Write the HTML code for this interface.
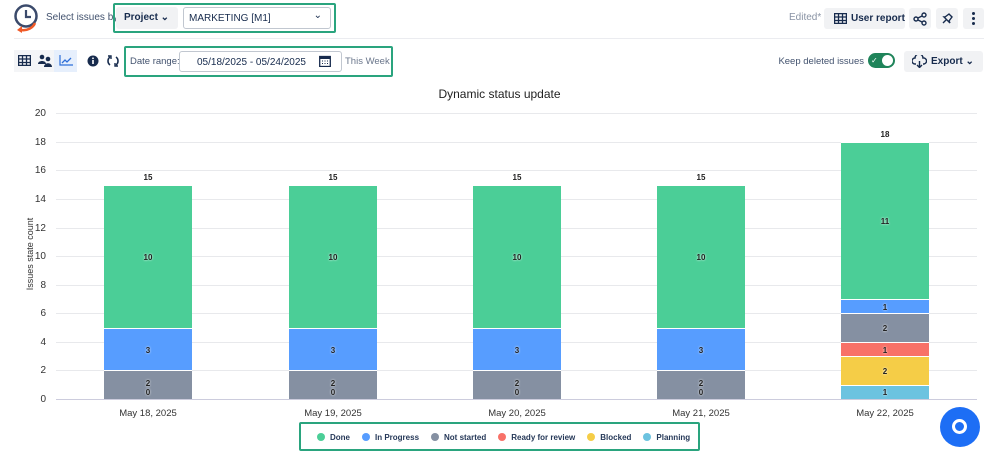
<!DOCTYPE html>
<html><head><meta charset="utf-8"><style>
*{box-sizing:border-box;margin:0;padding:0}
body{width:999px;height:463px;background:#fff;font-family:"Liberation Sans",sans-serif;color:#172b4d;position:relative;overflow:hidden;font-size:11px}
.a{position:absolute;white-space:nowrap}
.btn{position:absolute;background:#f1f2f4;border-radius:3px;white-space:nowrap}
.grid{position:absolute;left:56px;width:921px;height:1px;background:#e8e9ec}
.yl{position:absolute;left:30px;width:16px;text-align:right;font-size:10px;color:#333}
.seg{position:absolute;width:88px;border-top:1px solid #fff;color:#222;font-size:8px;font-weight:bold;display:flex;align-items:center;justify-content:center;text-shadow:0 0 2px #fff}
.xl{position:absolute;top:408px;width:120px;text-align:center;font-size:9.5px;color:#333}
.tot{position:absolute;width:88px;text-align:center;font-size:8px;font-weight:bold;color:#222}
.lg{display:inline-flex;align-items:center;margin-right:12px;font-weight:bold;font-size:8px;color:#253858}
.dot{width:8px;height:8px;border-radius:50%;display:inline-block;margin-right:5px}
</style></head><body>
<svg class="a" style="left:12px;top:3px" width="30" height="32" viewBox="0 0 30 32"><circle cx="14" cy="13" r="10.5" fill="none" stroke="#3b4a6b" stroke-width="2.5"/><path d="M14 7v7h5" fill="none" stroke="#3b4a6b" stroke-width="2.2"/><path d="M23 20c-2 5-8 8-14 7" fill="none" stroke="#f05a28" stroke-width="2.5"/><path d="M5 27l5-4v7z" fill="#f05a28"/></svg>
<div class="a" style="left:46px;top:12px;font-size:10px;color:#42526e">Select issues by:</div>
<div class="a" style="left:113px;top:3px;width:223px;height:30px;border:2px solid #2aa47e;border-radius:2px"></div>
<div class="btn" style="left:116px;top:7px;width:62px;height:22px;font-weight:bold;font-size:10px;padding:5px 8px">Project &#8964;</div>
<div class="a" style="left:183px;top:7px;width:148px;height:22px;border:1px solid #c1c7d0;border-radius:3px;font-size:10px;padding:5px 5px">MARKETING [M1]<span style="position:absolute;right:8px;top:2px">&#8964;</span></div>
<div class="a" style="left:789px;top:12px;color:#8993a4;font-size:10px">Edited*</div>
<div class="btn" style="left:824px;top:8px;width:81px;height:21px;font-weight:bold;font-size:10px;padding:5px 0 0 27px">User report</div>
<svg class="a" style="left:834px;top:13px" width="13" height="11"><rect x="0.5" y="0.5" width="12" height="10" fill="none" stroke="#172b4d" stroke-width="1.5"/><path d="M0 4h13M0 7.5h13M4.5 0v11M8.5 0v11" stroke="#172b4d" stroke-width="1.3"/></svg>
<div class="btn" style="left:909px;top:8px;width:22px;height:21px"></div>
<svg class="a" style="left:913px;top:12px" width="14" height="14"><circle cx="3" cy="7" r="2" fill="none" stroke="#172b4d" stroke-width="1.4"/><circle cx="11" cy="3" r="2" fill="none" stroke="#172b4d" stroke-width="1.4"/><circle cx="11" cy="11" r="2" fill="none" stroke="#172b4d" stroke-width="1.4"/><path d="M5 6l4-2M5 8l4 2" stroke="#172b4d" stroke-width="1.4"/></svg>
<div class="btn" style="left:936px;top:8px;width:22px;height:21px"></div>
<svg class="a" style="left:940px;top:12px" width="14" height="14"><path d="M3 11l3-3M5 5l4-3 3 3-3 4 1 2-6-6z" fill="none" stroke="#172b4d" stroke-width="1.4"/></svg>
<div class="btn" style="left:963px;top:8px;width:21px;height:21px"></div>
<div class="a" style="left:972px;top:12px;width:3px;height:3px;background:#172b4d;border-radius:50%;box-shadow:0 5px 0 #172b4d,0 10px 0 #172b4d"></div>
<div class="a" style="left:14px;top:38px;width:970px;height:1px;background:#ebecf0"></div>
<div class="a" style="left:14px;top:50px;width:63px;height:22px;background:#f4f5f7"></div>
<div class="a" style="left:54px;top:50px;width:23px;height:22px;background:#e6effc"></div>
<svg class="a" style="left:18px;top:55px" width="13" height="11"><rect x="0.5" y="0.5" width="12" height="10" fill="none" stroke="#172b4d" stroke-width="1.5"/><path d="M0 4h13M0 7.5h13M4.5 0v11M8.5 0v11" stroke="#172b4d" stroke-width="1.3"/></svg>
<svg class="a" style="left:38px;top:54px" width="14" height="13"><circle cx="4" cy="3" r="2.3" fill="#172b4d"/><circle cx="10" cy="5" r="2.3" fill="#172b4d"/><path d="M0 10c0-4 8-4 8 0zM6 13c0-5 8-5 8 0z" fill="#172b4d"/></svg>
<svg class="a" style="left:59px;top:55px" width="14" height="11"><path d="M1 0v10h13" fill="none" stroke="#2e6fd8" stroke-width="1.2"/><path d="M3 8l3-3 2 2 4-4" fill="none" stroke="#2e6fd8" stroke-width="1.3"/></svg>
<svg class="a" style="left:87px;top:55px" width="12" height="12"><circle cx="6" cy="6" r="5.5" fill="#172b4d"/><rect x="5.2" y="5" width="1.6" height="4" fill="#fff"/><circle cx="6" cy="3.3" r=".9" fill="#fff"/></svg>
<svg class="a" style="left:107px;top:54px" width="12" height="14"><path d="M3 3a5 5 0 0 0 0 8M9 3a5 5 0 0 1 0 8" fill="none" stroke="#172b4d" stroke-width="1.6"/><path d="M1 2h3v3M11 12H8V9" fill="none" stroke="#172b4d" stroke-width="1.4"/></svg>
<div class="a" style="left:124px;top:46px;width:269px;height:31px;border:2px solid #2aa47e;border-radius:2px"></div>
<div class="a" style="left:130px;top:56px;font-size:9.5px;color:#42526e">Date range:</div>
<div class="a" style="left:179px;top:51px;width:163px;height:21px;border:1px solid #c1c7d0;border-radius:3px;font-size:10px;padding:5px 0 0 17px">05/18/2025 - 05/24/2025</div>
<svg class="a" style="left:319px;top:55px" width="12" height="12"><rect x="0.7" y="1.5" width="10.6" height="10" fill="none" stroke="#172b4d" stroke-width="1.3"/><rect x="0.7" y="1.5" width="10.6" height="2.5" fill="#172b4d"/><path d="M3 6h1M5.5 6h1M8 6h1M3 8.5h1M5.5 8.5h1M8 8.5h1" stroke="#172b4d"/></svg>
<div class="a" style="left:345px;top:56px;font-size:9.5px;color:#6b778c">This Week</div>
<div class="a" style="right:135px;top:56px;font-size:9.5px;color:#42526e">Keep deleted issues</div>
<div class="a" style="left:868px;top:53px;width:27px;height:15px;border-radius:8px;background:#1f845a"></div>
<div class="a" style="left:882px;top:55px;width:11px;height:11px;border-radius:50%;background:#fff"></div>
<div class="a" style="left:871px;top:56px;color:#fff;font-size:8px">&#10003;</div>
<div class="btn" style="left:904px;top:51px;width:79px;height:21px;font-weight:bold;font-size:10px;padding:5px 0 0 27px">Export &#8964;</div>
<svg class="a" style="left:912px;top:55px" width="15" height="13"><path d="M4 9H3a3 3 0 0 1 0-6 4 4 0 0 1 8 0 3 3 0 0 1 1 6h-1" fill="none" stroke="#172b4d" stroke-width="1.4"/><path d="M7.5 6v6M5 10l2.5 2.5L10 10" fill="none" stroke="#172b4d" stroke-width="1.4"/></svg>
<div class="a" style="left:0;top:87px;width:999px;text-align:center;font-size:12px;color:#222">Dynamic status update</div>
<div class="grid" style="top:113px"></div><div class="grid" style="top:142px"></div><div class="grid" style="top:170px"></div><div class="grid" style="top:199px"></div><div class="grid" style="top:228px"></div><div class="grid" style="top:256px"></div><div class="grid" style="top:285px"></div><div class="grid" style="top:313px"></div><div class="grid" style="top:342px"></div><div class="grid" style="top:370px"></div><div class="grid" style="top:399px;background:#ccd"></div>
<div class="yl" style="top:108px">20</div><div class="yl" style="top:137px">18</div><div class="yl" style="top:165px">16</div><div class="yl" style="top:194px">14</div><div class="yl" style="top:223px">12</div><div class="yl" style="top:251px">10</div><div class="yl" style="top:280px">8</div><div class="yl" style="top:308px">6</div><div class="yl" style="top:337px">4</div><div class="yl" style="top:365px">2</div><div class="yl" style="top:394px">0</div>
<div class="a" style="left:-20px;top:249px;width:100px;text-align:center;transform:rotate(-90deg);font-size:9px;color:#333">Issues state count</div>
<div class="tot" style="left:104px;top:173px">15</div>
<div class="seg" style="left:104px;top:185px;height:144px;background:#4bce97">10</div>
<div class="seg" style="left:104px;top:328px;height:43px;background:#579dff">3</div>
<div class="seg" style="left:104px;top:370px;height:29px;background:#8590a2;line-height:9px;flex-direction:column;padding-top:6px">2<br>0</div>
<div class="tot" style="left:289px;top:173px">15</div>
<div class="seg" style="left:289px;top:185px;height:144px;background:#4bce97">10</div>
<div class="seg" style="left:289px;top:328px;height:43px;background:#579dff">3</div>
<div class="seg" style="left:289px;top:370px;height:29px;background:#8590a2;line-height:9px;flex-direction:column;padding-top:6px">2<br>0</div>
<div class="tot" style="left:473px;top:173px">15</div>
<div class="seg" style="left:473px;top:185px;height:144px;background:#4bce97">10</div>
<div class="seg" style="left:473px;top:328px;height:43px;background:#579dff">3</div>
<div class="seg" style="left:473px;top:370px;height:29px;background:#8590a2;line-height:9px;flex-direction:column;padding-top:6px">2<br>0</div>
<div class="tot" style="left:657px;top:173px">15</div>
<div class="seg" style="left:657px;top:185px;height:144px;background:#4bce97">10</div>
<div class="seg" style="left:657px;top:328px;height:43px;background:#579dff">3</div>
<div class="seg" style="left:657px;top:370px;height:29px;background:#8590a2;line-height:9px;flex-direction:column;padding-top:6px">2<br>0</div>
<div class="tot" style="left:841px;top:130px">18</div>
<div class="seg" style="left:841px;top:142px;height:157px;background:#4bce97">11</div>
<div class="seg" style="left:841px;top:299px;height:15px;background:#579dff">1</div>
<div class="seg" style="left:841px;top:313px;height:29px;background:#8590a2">2</div>
<div class="seg" style="left:841px;top:342px;height:15px;background:#f87168">1</div>
<div class="seg" style="left:841px;top:356px;height:29px;background:#f5cd47">2</div>
<div class="seg" style="left:841px;top:385px;height:14px;background:#6cc3e0">1</div>
<div class="xl" style="left:88px">May 18, 2025</div>
<div class="xl" style="left:273px">May 19, 2025</div>
<div class="xl" style="left:457px">May 20, 2025</div>
<div class="xl" style="left:641px">May 21, 2025</div>
<div class="xl" style="left:825px">May 22, 2025</div>
<div class="a" style="left:299px;top:422px;width:401px;height:29px;border:2px solid #2aa47e;border-radius:2px;padding:8px 0 0 16px;white-space:nowrap">
<span class="lg"><span class="dot" style="background:#4bce97"></span>Done</span><span class="lg"><span class="dot" style="background:#579dff"></span>In Progress</span><span class="lg"><span class="dot" style="background:#8590a2"></span>Not started</span><span class="lg"><span class="dot" style="background:#f87168"></span>Ready for review</span><span class="lg"><span class="dot" style="background:#f5cd47"></span>Blocked</span><span class="lg"><span class="dot" style="background:#6cc3e0"></span>Planning</span>
</div>
<div class="a" style="left:940px;top:407px;width:40px;height:40px;border-radius:50%;background:#1d6ef5"></div>
<div class="a" style="left:952px;top:419px;width:15px;height:15px;border-radius:50%;border:3px solid #fff"></div>
</body></html>
